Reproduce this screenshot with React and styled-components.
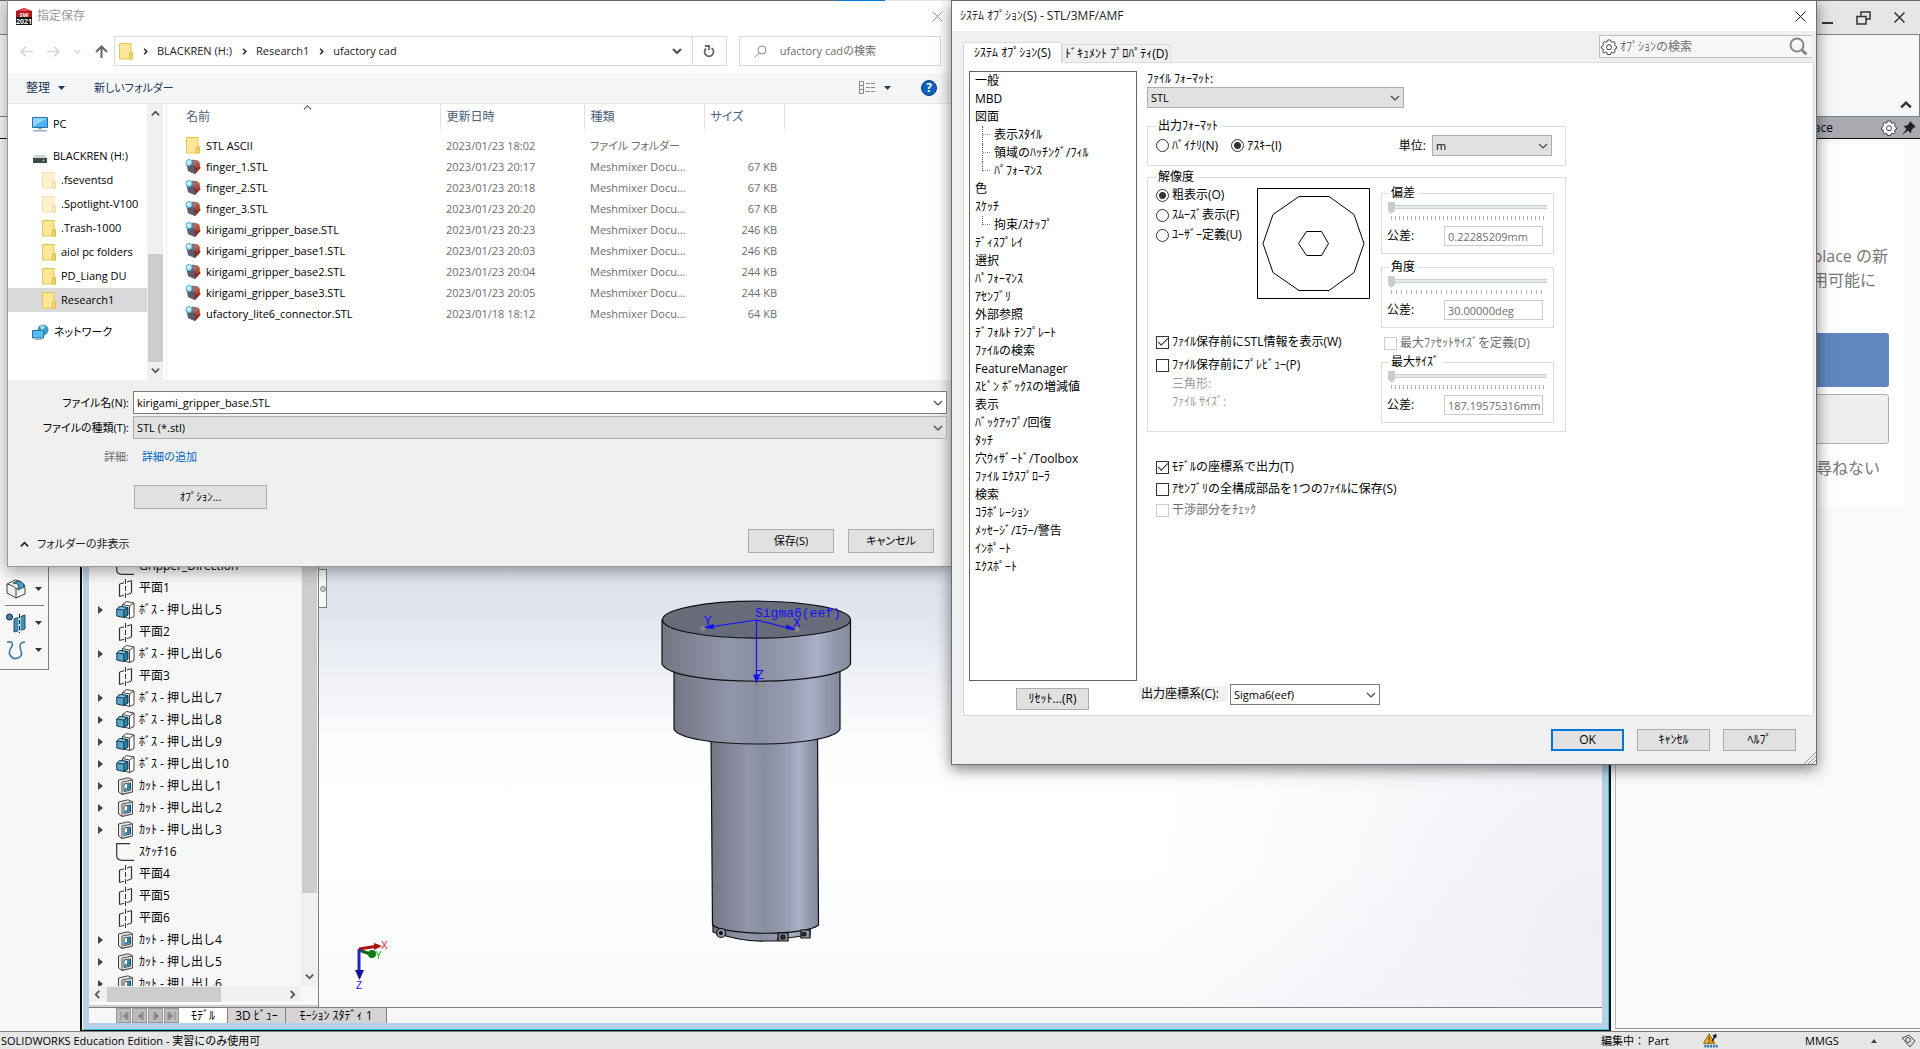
import React from "react";
import styled, { createGlobalStyle, css } from "styled-components";

const Global = createGlobalStyle`
  * { box-sizing: border-box; }
  body { margin: 0; background: #f7f7f7; }
  body, button, input, select, textarea {
    font-family: "Open Sans", "Noto Sans CJK JP", sans-serif;
    font-size: 12px;
    line-height: 18px;
    color: #000;
  }
  svg { display: block; flex: none; }
`;

/* ---------- shell ---------- */
const Desktop = styled.div`
  position: relative;
  height: 100vh;
  min-height: 800px;
  display: grid;
  grid-template-rows: 139px minmax(0, 1fr) 18px;
  overflow: hidden;
  background: #f7f7f7;
`;
const Ribbon = styled.header`
  display: grid;
  grid-template-rows: 34px 1fr 23px;
  border-top: 1px solid #6b6b6b;
`;
const AppTitle = styled.div`
  display: flex;
  justify-content: flex-end;
  align-items: center;
  gap: 23px;
  padding-right: 15px;
  background: #e6e6e6;
  border-bottom: 1px solid #808080;
`;
const RibbonBody = styled.div`
  display: flex;
  justify-content: flex-end;
  align-items: flex-end;
  padding: 0 7px 5px 0;
  background: #f7f7f7;
  border-right: 1px solid #808080;
  color: #333;
`;
const PaneHeader = styled.div`
  display: flex;
  justify-content: flex-end;
  align-items: center;
  gap: 5px;
  padding-right: 4px;
  background: linear-gradient(90deg, #f7f7f7 50%, #a9abb0 50%);
  border-bottom: 1px solid #111;
  border-top: 1px solid #808080;
`;
const PaneTitle = styled.span`
  margin-right: 43px;
`;
const IconButton = styled.button`
  display: flex;
  align-items: center;
  justify-content: center;
  padding: 0;
  border: 0;
  background: none;
  color: #444;
`;
const Workspace = styled.div`
  display: grid;
  grid-template-columns: 83px minmax(0, 1fr) 312px;
  min-height: 0;
`;
const StatusBar = styled.footer`
  display: flex;
  align-items: center;
  justify-content: space-between;
  padding: 0 4px 0 1px;
  background: #e6e6e6;
  border-top: 1px solid #808080;
  font-size: 11px;
  line-height: 16px;
  white-space: nowrap;
`;
const StatusGroup = styled.div`
  display: flex;
  align-items: center;
`;
const StatusItem = styled.span`
  width: ${(p) => p.$w}px;
  display: flex;
  align-items: center;
`;

/* ---------- left toolbar ---------- */
const ToolRail = styled.nav`
  width: 49px;
  height: 531px;
  display: flex;
  flex-direction: column;
  justify-content: flex-end;
  gap: 7px;
  padding: 0 4px 9px 5px;
  border-right: 1px solid #808080;
  border-bottom: 1px solid #808080;
`;
const ToolItem = styled.button`
  display: flex;
  align-items: center;
  gap: 8px;
  height: 20px;
  padding: 0;
  border: 0;
  background: none;
  color: #333;
`;
const ToolRule = styled.hr`
  width: 100%;
  margin: -1px 0 0;
  border: 0;
  border-top: 1px solid #808080;
`;

/* ---------- document ---------- */
const DocFrame = styled.section`
  display: grid;
  grid-template-rows: minmax(0, 1fr) 16px;
  margin-bottom: 2px;
  border: solid #b8cfea;
  border-width: 0 6px 6px 6px;
  outline: 2px solid #0a0a0a;
  outline-offset: 1px;
  box-shadow: 1px 1px 0 #22c7e0;
  min-height: 0;
`;
const DocBody = styled.div`
  display: grid;
  grid-template-columns: 230px minmax(0, 1fr);
  min-height: 0;
`;
const TreePane = styled.div`
  display: grid;
  grid-template-columns: minmax(0, 1fr) 17px;
  grid-template-rows: minmax(0, 1fr) 16px 5px;
  min-height: 0;
  border-right: 1px solid #808080;
  background: #f7f7f7;
`;
const Tree = styled.ul`
  min-height: 0;
  overflow: hidden;
  margin: 0;
  padding: 416px 0 0;
  list-style: none;
`;
const TreeRow = styled.li`
  display: grid;
  grid-template-columns: 18px 23px 1fr;
  align-items: center;
  height: 22px;
  padding-left: 9px;
  white-space: nowrap;
`;
const Splitter = styled.div`
  grid-column: 1 / -1;
  border-top: 2px solid #fff;
  border-bottom: 2px solid #cfcfcf;
`;
const ScrollTrack = styled.div`
  display: flex;
  flex-direction: ${(p) => (p.$horizontal ? "row" : "column")};
  justify-content: space-between;
  align-items: center;
  padding: ${(p) => (p.$horizontal ? "0 4px" : "5px 0")};
  background: #f0f0f0;
  color: #555;
`;
const ScrollThumb = styled.div`
  background: #cdcdcd;
  ${(p) =>
    p.$horizontal
      ? css`width: 114px; height: 15px; margin: 0 auto 0 5px;`
      : css`width: 15px; height: ${p.$h}px; margin: auto 0 ${p.$gap}px;`}
`;
const Viewport = styled.div`
  position: relative;
  overflow: hidden;
  background:
    radial-gradient(circle at 100% 90%, rgba(234, 236, 243, .8), rgba(255, 255, 255, 0) 30%),
    linear-gradient(#d3d8e6 0, #d9ddea 400px, #e2e6ef 480px, #f2f4f8 550px, #fdfdfe 610px, #fff 660px, #fff 84%, #f8f9fb 100%);
`;
const ModelView = styled.svg`
  position: absolute;
  left: 301px;
  top: 441px;
`;
const Triad = styled.svg`
  position: absolute;
  left: 32px;
  bottom: 14px;
`;
const PaneGrip = styled.button`
  position: absolute;
  left: 0;
  top: 430px;
  width: 8px;
  height: 39px;
  padding: 0;
  display: grid;
  place-items: center;
  border: 1px solid #808080;
  border-left: 0;
  background: #f7f7f7;
`;
const DocTabs = styled.nav`
  display: flex;
  background: #f7f7f7;
  border-top: 1px solid #808080;
`;
const TabNav = styled.div`
  display: flex;
  gap: 1px;
  margin-left: 27px;
`;
const TabNavButton = styled.button`
  width: 15px;
  height: 15px;
  padding: 0;
  display: grid;
  place-items: center;
  border: 1px solid #999;
  background: #bcbcbc;
  color: #8a8a8a;
`;
const DocTab = styled.button`
  width: ${(p) => p.$w}px;
  padding: 0;
  border: 0;
  border-right: 1px solid #808080;
  background: ${(p) => (p.$active ? "#fff" : "#d4d4d4")};
  line-height: 15px;
  white-space: nowrap;
  overflow: hidden;
`;

/* ---------- task pane ---------- */
const TaskPane = styled.aside`
  margin: 2px 0 2px 7px;
  padding: 3px 16px 0 0;
  background: #fafafa;
  border-left: 1px solid #bbb;
  border-bottom: 1px solid #999;
`;
const TaskCard = styled.div`
  display: flex;
  flex-direction: column;
  height: 363px;
  padding: 100px 15px 0 120px;
  background: #fff;
`;
const TaskText = styled.p`
  margin: 0 ${(p) => p.$pad}px 0 0;
  color: #777;
  font-size: 16px;
  line-height: 24px;
  text-align: right;
  white-space: nowrap;
`;
const TaskButton = styled.button`
  height: ${(p) => (p.$primary ? 54 : 50)}px;
  margin-top: ${(p) => (p.$primary ? 41 : 7)}px;
  border-radius: 3px;
  border: ${(p) => (p.$primary ? "0" : "1px solid #b0b0b0")};
  background: ${(p) => (p.$primary ? "#6088be" : "#efefef")};
`;
const TaskNote = styled(TaskText)`
  margin-top: 12px;
`;

/* ---------- dialogs ---------- */
const WindowLayer = styled.div`
  position: absolute;
  inset: 0 0 auto 0;
  display: grid;
  grid-template-columns: minmax(0, 944fr) minmax(0, 866fr);
  align-items: start;
  padding: 0 103px 0 7px;
`;
const Dialog = styled.section`
  display: flex;
  flex-direction: column;
  background: #f0f0f0;
  border: 1px solid ${(p) => (p.$active ? "#6e6e6e" : "#999")};
  border-top-color: #6b6b6b;
  box-shadow: 0 4px 14px rgba(0, 0, 0, ${(p) => (p.$active ? 0.5 : 0.35)});
`;
const SaveWindow = styled(Dialog)`
  border-right: 0;
  border-top: 0;
  font-size: 11px;
  input, select, button { font-size: 11px; }
`;
const EdgeLine = styled.div`
  height: 1px;
  background: linear-gradient(90deg, #6b6b6b 88%, #0078d7 88%, #0078d7 93%, #e5e5e5 93%);
`;
const TitleBar = styled.header`
  display: flex;
  align-items: center;
  gap: 5px;
  height: 30px;
  padding: 0 ${(p) => p.$right}px 0 8px;
  background: #fff;
  color: ${(p) => (p.$muted ? "#999" : "#222")};
`;
const DialogTitle = styled.h1`
  flex: 1;
  margin: 0;
  font-size: 12px;
  font-weight: 400;
`;
const NavRow = styled.div`
  display: grid;
  grid-template-columns: 94px minmax(0, 612fr) minmax(0, 202fr);
  column-gap: 12px;
  padding: 5px 10px 7px 0;
  background: #fff;
`;
const NavArrows = styled.div`
  display: flex;
  align-items: center;
  gap: 14px;
  padding-left: 12px;
  color: #d6d6d6;
`;
const AddressBar = styled.div`
  display: flex;
  align-items: center;
  height: 30px;
  border: 1px solid #d9d9d9;
  padding-left: 4px;
`;
const Crumb = styled.a`
  display: flex;
  align-items: center;
  margin-left: 9px;
  gap: 8px;
  color: #222;
  text-decoration: none;
  white-space: nowrap;
`;
const AddressEnd = styled.div`
  display: flex;
  align-items: center;
  margin-left: auto;
  height: 100%;
  color: #555;
`;
const RefreshButton = styled(IconButton)`
  width: 34px;
  height: 100%;
  margin-left: 10px;
  border-left: 1px solid #d9d9d9;
`;
const SearchField = styled.label`
  display: flex;
  align-items: center;
  gap: 13px;
  height: 30px;
  padding: 0 4px 0 14px;
  border: 1px solid #d9d9d9;
  color: #888;
`;
const BareInput = styled.input`
  flex: 1;
  min-width: 0;
  padding: 0;
  border: 0;
  outline: 0;
  background: none;
  &::placeholder { color: #6d6d6d; opacity: 1; }
`;
const CommandBar = styled.div`
  display: flex;
  align-items: center;
  height: 31px;
  padding: 0 14px 0 18px;
  background: #f5f6f7;
  border-bottom: 1px solid #e3e5e8;
`;
const Command = styled.button`
  display: flex;
  align-items: center;
  gap: 8px;
  padding: 0;
  border: 0;
  background: none;
  color: #1e395b;
  margin-right: ${(p) => p.$gap || 0}px;
  font-feature-settings: "palt";
`;
const CommandText = styled.span`
  font-size: 12px;
`;
const CommandEnd = styled.div`
  display: flex;
  align-items: center;
  margin-left: auto;
`;
const Browser = styled.div`
  display: grid;
  grid-template-columns: 139px 16px 4px minmax(0, 1fr);
  height: 276px;
  background: #fff;
`;
const FolderTree = styled.ul`
  margin: 0;
  padding: 8px 0 0;
  list-style: none;
`;
const FolderRow = styled.li`
  display: flex;
  align-items: center;
  gap: 5px;
  height: 24px;
  margin: 0 0 ${(p) => (p.$after ? 8 : 0)}px;
  padding-left: ${(p) => (p.$nested ? 34 : 24)}px;
  background: ${(p) => (p.$selected ? "#d9d9d9" : "none")};
  white-space: nowrap;
  font-feature-settings: "palt";
`;
const PaneRule = styled.div`
  border-right: 1px solid #f0f0f0;
`;
const FileTable = styled.table`
  width: 100%;
  table-layout: fixed;
  border-collapse: collapse;
  align-self: start;
`;
const HeadCell = styled.th`
  position: relative;
  width: ${(p) => p.$w};
  height: 25px;
  padding: 0 0 0 ${(p) => p.$pad || 6}px;
  border-right: ${(p) => (p.$last ? "0" : "1px solid #e2e2e2")};
  color: #4c607a;
  font-size: 12px;
  font-weight: 400;
  text-align: left;
  font-feature-settings: "palt";
`;
const SortMark = styled.span`
  position: absolute;
  left: 50%;
  top: -1px;
  color: #555;
`;
const FileCell = styled.td`
  height: 21px;
  padding: 0 7px 0 6px;
  color: #6d6d6d;
  text-align: ${(p) => (p.$right ? "right" : "left")};
  white-space: nowrap;
  font-feature-settings: "palt";
`;
const HeadGap = styled.tr`
  height: 6px;
`;
const FileName = styled.div`
  display: flex;
  align-items: center;
  gap: 5px;
  padding-left: 12px;
  color: #000;
`;
const FileIcon = styled.span`
  width: 16px;
  display: flex;
  justify-content: center;
`;
const SaveForm = styled.form`
  display: grid;
  grid-template-columns: 121px minmax(0, 1fr);
  column-gap: 4px;
  row-gap: 2px;
  padding: 11px 4px 0 0;
`;
const FieldLabel = styled.label`
  align-self: center;
  text-align: right;
  white-space: nowrap;
  font-feature-settings: "palt";
  color: ${(p) => (p.$muted ? "#6d6d6d" : "#000")};
`;
const DetailLink = styled.a`
  padding: 7px 0 7px 9px;
  color: #0066cc;
  text-decoration: none;
`;
const Push = styled.button`
  width: ${(p) => p.$w}px;
  height: ${(p) => p.$h || 24}px;
  padding: 0;
  border: ${(p) => (p.$default ? "2px solid #0078d7" : "1px solid #adadad")};
  background: #e1e1e1;
  font-feature-settings: "palt";
`;
const OptionRow = styled.div`
  grid-column: 2;
  padding: 10px 0 0 1px;
`;
const SaveFooter = styled.footer`
  display: flex;
  align-items: flex-end;
  gap: 14px;
  padding: 20px 17px 13px 12px;
`;
const HideFolders = styled(Command)`
  color: #222;
  margin-right: auto;
`;

/* ---------- form parts ---------- */
const Combo = styled.span`
  position: relative;
  display: flex;
  align-items: center;
  height: ${(p) => p.$h || 21}px;
  width: ${(p) => (p.$w ? `${p.$w}px` : "auto")};
  border: 1px solid ${(p) => (p.$white ? "#7a7a7a" : "#adadad")};
  background: ${(p) => (p.$white ? "#fff" : "#e1e1e1")};
  color: #444;
  font-size: 11px;
`;
const comboText = css`
  width: 100%;
  height: 100%;
  padding: 0 20px 0 3px;
  border: 0;
  outline: 0;
  background: none;
  appearance: none;
  font-size: 11px;
`;
const ComboSelect = styled.select`${comboText}`;
const ComboInput = styled.input`${comboText}`;
const ComboArrow = styled.span`
  position: absolute;
  right: 3px;
  pointer-events: none;
`;

/* ---------- options dialog ---------- */
const OptionsTop = styled.div`
  display: flex;
  align-items: flex-end;
  justify-content: space-between;
  height: 31px;
  padding: 0 4px 0 11px;
`;
const TabStrip = styled.div`
  display: flex;
  align-items: flex-end;
`;
const Tab = styled.button`
  position: relative;
  width: ${(p) => p.$w}px;
  height: ${(p) => (p.$active ? 21 : 18)}px;
  margin-bottom: ${(p) => (p.$active ? -1 : 0)}px;
  padding: 0;
  border: 1px solid #dcdcdc;
  border-bottom: 0;
  background: ${(p) => (p.$active ? "#fff" : "#f0f0f0")};
  line-height: 16px;
  white-space: nowrap;
`;
const OptionSearch = styled.label`
  display: flex;
  align-items: center;
  gap: 3px;
  width: 213px;
  height: 23px;
  margin-bottom: 4px;
  padding: 0 4px 0 1px;
  border: 1px solid #c0c0c0;
  border-right: 0;
  background: #f7f7f7;
`;
const OptionsPane = styled.div`
  display: grid;
  grid-template-columns: 168px minmax(0, 1fr);
  column-gap: 10px;
  margin: 0 2px 0 11px;
  padding: 8px 6px 4px 5px;
  border: 1px solid #dcdcdc;
  background: #fff;
`;
const Category = styled.ul`
  height: 610px;
  margin: 0;
  padding: 0;
  border: 1px solid #646464;
  list-style: none;
`;
const CategoryItem = styled.li`
  display: flex;
  height: 18px;
  padding-left: ${(p) => (p.$nested ? 12 : 5)}px;
  white-space: nowrap;
`;
const Branch = styled.span`
  width: 9px;
  height: ${(p) => (p.$end ? 9 : 18)}px;
  margin-right: 3px;
  border-left: 1px dotted #666;
  background: linear-gradient(90deg, #888 50%, transparent 50%) 0 8px / 2px 1px repeat-x;
`;
const Settings = styled.div`
  display: flex;
  flex-direction: column;
  align-items: flex-start;
`;
const Caption = styled.label`
  margin-bottom: 1px;
  line-height: 15px;
`;
const Group = styled.fieldset`
  width: ${(p) => p.$w}px;
  margin: ${(p) => p.$mt || 0}px 0 0;
  padding: ${(p) => p.$pad};
  min-width: 0;
  border: 1px solid #dcdcdc;
`;
const Legend = styled.legend`
  margin-left: ${(p) => p.$in || 0}px;
  padding: 0 3px 0 2px;
  height: 18px;
`;
const FormatRow = styled.div`
  display: flex;
  align-items: center;
  gap: 13px;
`;
const UnitField = styled.div`
  display: flex;
  align-items: center;
  gap: 6px;
  margin-left: auto;
`;
const Choice = styled.label`
  display: flex;
  align-items: center;
  gap: 3px;
  color: ${(p) => (p.$off ? "#6d6d6d" : "#000")};
  margin-bottom: ${(p) => p.$mb || 0}px;
  white-space: nowrap;
`;
const InsetChoice = styled(Choice)`
  padding: 6px 0 0 3px;
`;
const Radio = styled.input`
  appearance: none;
  width: 13px;
  height: 13px;
  margin: 0;
  border: 1px solid #333;
  border-radius: 50%;
  background: ${(p) => (p.defaultChecked ? "radial-gradient(#333 3px, #fff 4px)" : "#fff")};
`;
const Check = styled.input`
  appearance: none;
  display: grid;
  place-items: center;
  width: 13px;
  height: 13px;
  margin: 0;
  border: 1px solid ${(p) => (p.disabled ? "#ccc" : "#333")};
  background: #fff;
  &:checked::after {
    content: "";
    width: 9px;
    height: 4px;
    margin-bottom: 3px;
    border: solid #333;
    border-width: 0 0 1px 1px;
    transform: rotate(-45deg);
  }
`;
const Resolution = styled.div`
  display: grid;
  grid-template-columns: 101px 124px 173px;
  grid-template-rows: 113px 1fr;
  align-items: start;
`;
const RadioStack = styled.div`
  display: flex;
  flex-direction: column;
  gap: 2px;
`;
const Preview = styled.svg`
  margin-top: 2px;
`;
const LowerLeft = styled.div`
  grid-column: 1 / 3;
  padding-top: 34px;
`;
const Dimmed = styled.div`
  padding: 2px 0 0 16px;
  color: #999;
  line-height: 16px;
`;
const ToleranceColumn = styled.div`
  grid-column: 3;
  grid-row: 1 / 3;
`;
const Slider = styled.input`
  display: block;
  appearance: none;
  width: 100%;
  height: 12px;
  margin: 0;
  background: linear-gradient(#d0d0d0, #d0d0d0) 4px 3px / 100% 1px no-repeat,
    linear-gradient(#e7eaea, #e7eaea) 4px 4px / 100% 2px no-repeat,
    linear-gradient(#d0d0d0, #d0d0d0) 4px 6px / 100% 1px no-repeat;
  &::-webkit-slider-thumb {
    appearance: none;
    width: 7px;
    height: 12px;
    background: #ccc;
    clip-path: polygon(0 0, 100% 0, 100% 70%, 50% 100%, 0 70%);
  }
`;
const Ticks = styled.div`
  height: 4px;
  margin: 2px 3px 0;
  background: repeating-linear-gradient(90deg, #b5b5b5 0 1px, transparent 1px ${(p) => p.$step}px);
`;
const ToleranceField = styled.div`
  display: flex;
  align-items: center;
  justify-content: space-between;
  padding: 6px 4px 2px 0;
`;
const ToleranceLabel = styled.label`
  margin-left: -1px;
`;
const ValueInput = styled.input`
  width: 99px;
  height: 20px;
  padding: 0 0 0 3px;
  border: 1px solid #ccc;
  background: #fff;
  color: #6d6d6d;
  font-size: 11px;
`;
const OutputChecks = styled.div`
  padding: 26px 0 0 9px;
`;
const BottomRow = styled.div`
  grid-column: 1 / -1;
  display: flex;
  align-items: flex-start;
  height: 30px;
  padding: 3px 0 0 47px;
`;
const ResetButton = styled(Push)`
  margin-top: 4px;
`;
const OriginLabel = styled.label`
  margin: 2px 2px 0 50px;
  padding-left: 2px;
  width: 89px;
  background: #f0f0f0;
  line-height: 16px;
  white-space: nowrap;
`;
const OptionsFooter = styled.footer`
  display: flex;
  justify-content: flex-end;
  gap: 13px;
  height: 48px;
  padding: 13px 0 0;
`;
const Grip = styled.svg`
  align-self: flex-end;
  margin-left: -5px;
`;

/* ---------- icons ---------- */
const Chevron = ({ dir = "down", size = 9, w = 2 }) => {
  const d = { down: "M1 3l4 4 4-4", up: "M1 7l4-4 4 4", left: "M7 1L3 5l4 4", right: "M3 1l4 4-4 4" }[dir];
  return (
    <svg width={size} height={size} viewBox="0 0 10 10" fill="none" stroke="currentColor" strokeWidth={w}>
      <path d={d} />
    </svg>
  );
};
const Caret = ({ color = "#333" }) => (
  <svg width="7" height="4" viewBox="0 0 7 4"><path d="M0 0h7L3.500 4z" fill={color} /></svg>
);
const Arrow = ({ dir, color = "#d6d6d6" }) => (
  <svg width="13" height="13" viewBox="0 0 13 13" fill="none" stroke={color} strokeWidth={dir === "up" ? 2 : 1.5}>
    {dir === "left" && <path d="M13 6.500H1M6 1.500l-5 5 5 5" />}
    {dir === "right" && <path d="M0 6.500h12M7 1.500l5 5-5 5" />}
    {dir === "up" && <path d="M6.500 13V2M1 7l5.500-5.500L12 7" />}
  </svg>
);
const Cross = ({ size = 11, color = "#111", w = 1 }) => (
  <svg width={size} height={size} viewBox="0 0 11 11" stroke={color} strokeWidth={w}><path d="M.5.5l10 10M10.500.5l-10 10" /></svg>
);
const Folder = ({ faded }) => (
  <svg width="14" height="17" viewBox="0 0 14 17" opacity={faded ? 0.5 : 1}>
    <path d="M.5.5h11.500v9h1.500v6.500H.5z" fill="#ffe79a" stroke="#e9c44c" />
    <path d="M10.500 10h2.500v6h-2.500z" fill="#ffe08a" stroke="#e3b93a" />
  </svg>
);
const Gear = () => (
  <svg width="16" height="16" viewBox="0 0 16 16" fill="#fff" stroke="#444">
    <path d="M6.500 1h3l.5 1.800 1.200.5L13 2.500 14.200 4l-.7 1.500.5 1.200 1.500.6v2l-1.500.6-.5 1.200.7 1.600L12.800 14l-1.600-.8-1.200.5-.5 1.800h-3L6 13.700l-1.200-.5-1.600.8L1.800 12.700l.7-1.600L2 9.900l-1.500-.6v-2L2 6.700l.5-1.200L1.800 4 3.200 2.500l1.600.8L6 2.800z" />
    <circle cx="8" cy="8.200" r="2.500" />
  </svg>
);
const SwIcon = () => (
  <svg width="16" height="17" viewBox="0 0 16 17">
    <path d="M0 3l8-3 8 3v7H0z" fill="#b5161c" /><path d="M2 2.500L8 .5l6 2-6 1z" fill="#e4474c" />
    <path d="M0 9h16v8H0z" fill="#111" />
    <text x="8" y="9" fontSize="6" fontWeight="700" fill="#fff" textAnchor="middle">SW</text>
    <text x="8" y="16" fontSize="7" fontWeight="700" fill="#fff" textAnchor="middle">2021</text>
  </svg>
);
const PcIcon = () => (
  <svg width="16" height="16" viewBox="0 0 16 16">
    <path d="M.5 1.500h15v10H.5z" fill="#49b5f5" stroke="#2a6f9c" /><path d="M1 2h14L1 11z" fill="#8ed4ff" />
    <path d="M6 12h4v1.500H6zM1 14h14v1.500H1z" fill="#9fb4c4" />
  </svg>
);
const DriveIcon = () => (
  <svg width="16" height="16" viewBox="0 0 16 16">
    <path d="M3 7h10l2 3H1z" fill="#d5d5d5" /><path d="M1 10h14v5H1z" fill="#45484a" /><circle cx="11.500" cy="12.500" r="1" fill="#4fe04f" />
  </svg>
);
const NetIcon = () => (
  <svg width="17" height="17" viewBox="0 0 17 17">
    <circle cx="11" cy="6" r="5.500" fill="#3f9cc4" /><path d="M8 2q3-2 5 1l-3 4z" fill="#a9d8ec" />
    <path d="M.5 6.500h11v7.500H.5z" fill="#56bdf8" stroke="#2a6f9c" /><path d="M3 15.500h7" stroke="#9fb4c4" />
  </svg>
);
const MeshIcon = () => (
  <svg width="16" height="16" viewBox="0 0 16 16">
    <path d="M1 4l7-3.500 6 2 1.500 6.500L10 15l-7-3z" fill="#6b6f80" />
    <path d="M7 2l5-1 3 3-5 4z" fill="#9a6f78" /><path d="M10 2l4 1 1 5-2-1z" fill="#d8592a" />
    <path d="M3 5l6 2 1 8-7-3z" fill="#5a5d6e" /><path d="M9 7l4 0 2.500 2-5.500 6z" fill="#8c2b26" /><path d="M9 7l5-3-1 6z" fill="#b04a3c" />
    <circle cx="4" cy="3.500" r="3" fill="#bfe9f5" stroke="#45b4d4" /><path d="M3 4l2-2" stroke="#fff" />
  </svg>
);
const BossIcon = () => (
  <svg width="19" height="18" viewBox="0 0 19 18" strokeLinejoin="round">
    <path d="M6.500 3.500l4-3 7.500 1.500v13.500l-4.500 2-7-2z" fill="#fff" stroke="#444" />
    <path d="M6.500 3.500l7 1.500L18 2M13.500 5v12.500" fill="none" stroke="#444" />
    <path d="M.8 8l3-2.500 8 1V14l-4 2.500-7-1.500z" fill="#5aa6c8" stroke="#123f55" />
    <path d="M.8 8l3-2.500 8 1-4 2.500z" fill="#8ecbe4" stroke="#123f55" />
    <path d="M7.800 9l4-2.500V14l-4 2.500z" fill="#2f7ea3" stroke="#123f55" />
  </svg>
);
const CutIcon = () => (
  <svg width="19" height="18" viewBox="0 0 19 18" strokeLinejoin="round">
    <path d="M2.500 3L12 .8l4.500 2V15L6 17.500 2.500 15z" fill="#e8e8e8" stroke="#444" />
    <path d="M6 5l10.500-2v12L6 17.300z" fill="#d9e0e4" stroke="#555" /><path d="M8 7l6.500-1v7L8 14.500z" fill="#fff" stroke="#444" />
    <path d="M11 6.500l3-.5v6.500l-5.500 1.500v-2.500l2.500-.5z" fill="#2f86ad" />
  </svg>
);
const PlaneIcon = () => (
  <svg width="19" height="19" viewBox="0 0 19 19" fill="none" stroke="#333">
    <path d="M3.500 5v12.500M15.500 1.500V14" strokeWidth="1.200" />
    <path d="M3.500 5l4.500-1.200M11 3l4.500-1.500M3.500 17.500l4.500-1.200M11 15.500l4.500-1.500" />
    <path d="M9.500 0v19" strokeDasharray="5 2" />
  </svg>
);
const SketchIcon = () => (
  <svg width="19" height="18" viewBox="0 0 19 18" fill="none" stroke="#333" strokeWidth="1.200"><path d="M14 .7H.7v12q0 4.600 6 4.600H18" /></svg>
);
const treeIcons = { boss: BossIcon, cut: CutIcon, plane: PlaneIcon, sketch: SketchIcon };

/* ---------- data ---------- */
const features = [
  ["sketch", "Gripper_Direction"], ["plane", "平面1"], ["boss", "ﾎﾞｽ - 押し出し5"], ["plane", "平面2"],
  ["boss", "ﾎﾞｽ - 押し出し6"], ["plane", "平面3"], ["boss", "ﾎﾞｽ - 押し出し7"], ["boss", "ﾎﾞｽ - 押し出し8"],
  ["boss", "ﾎﾞｽ - 押し出し9"], ["boss", "ﾎﾞｽ - 押し出し10"], ["cut", "ｶｯﾄ - 押し出し1"], ["cut", "ｶｯﾄ - 押し出し2"],
  ["cut", "ｶｯﾄ - 押し出し3"], ["sketch", "ｽｹｯﾁ16"], ["plane", "平面4"], ["plane", "平面5"], ["plane", "平面6"],
  ["cut", "ｶｯﾄ - 押し出し4"], ["cut", "ｶｯﾄ - 押し出し5"], ["cut", "ｶｯﾄ - 押し出し6"],
];
const files = [
  ["STL ASCII", "2023/01/23 18:02", "ファイル フォルダー", ""],
  ["finger_1.STL", "2023/01/23 20:17", "Meshmixer Docu...", "67 KB"],
  ["finger_2.STL", "2023/01/23 20:18", "Meshmixer Docu...", "67 KB"],
  ["finger_3.STL", "2023/01/23 20:20", "Meshmixer Docu...", "67 KB"],
  ["kirigami_gripper_base.STL", "2023/01/23 20:23", "Meshmixer Docu...", "246 KB"],
  ["kirigami_gripper_base1.STL", "2023/01/23 20:03", "Meshmixer Docu...", "246 KB"],
  ["kirigami_gripper_base2.STL", "2023/01/23 20:04", "Meshmixer Docu...", "244 KB"],
  ["kirigami_gripper_base3.STL", "2023/01/23 20:05", "Meshmixer Docu...", "244 KB"],
  ["ufactory_lite6_connector.STL", "2023/01/18 18:12", "Meshmixer Docu...", "64 KB"],
];
const folders = [
  [".fseventsd", true], [".Spotlight-V100", true], [".Trash-1000"], ["aiol pc folders"], ["PD_Liang DU"], ["Research1"],
];
const categories = [
  ["一般"], ["MBD"], ["図面"], ["表示ｽﾀｲﾙ", "mid"], ["領域のﾊｯﾁﾝｸﾞ/ﾌｨﾙ", "mid"], ["ﾊﾟﾌｫｰﾏﾝｽ", "end"], ["色"], ["ｽｹｯﾁ"],
  ["拘束/ｽﾅｯﾌﾟ", "end"], ["ﾃﾞｨｽﾌﾟﾚｲ"], ["選択"], ["ﾊﾟﾌｫｰﾏﾝｽ"], ["ｱｾﾝﾌﾞﾘ"], ["外部参照"], ["ﾃﾞﾌｫﾙﾄ ﾃﾝﾌﾟﾚｰﾄ"],
  ["ﾌｧｲﾙの検索"], ["FeatureManager"], ["ｽﾋﾟﾝ ﾎﾞｯｸｽの増減値"], ["表示"], ["ﾊﾞｯｸｱｯﾌﾟ/回復"], ["ﾀｯﾁ"],
  ["穴ｳｨｻﾞｰﾄﾞ/Toolbox"], ["ﾌｧｲﾙ ｴｸｽﾌﾟﾛｰﾗ"], ["検索"], ["ｺﾗﾎﾞﾚｰｼｮﾝ"], ["ﾒｯｾｰｼﾞ/ｴﾗｰ/警告"], ["ｲﾝﾎﾟｰﾄ"], ["ｴｸｽﾎﾟｰﾄ"],
];

/* ---------- pieces ---------- */
const Model = () => (
  <ModelView width="300" height="380" viewBox="0 0 300 380">
    <defs>
      <linearGradient id="metal">
        <stop offset="0" stopColor="#747685" /><stop offset=".35" stopColor="#9196aa" /><stop offset=".5" stopColor="#888da0" />
        <stop offset=".72" stopColor="#999eb4" /><stop offset=".82" stopColor="#abb0c8" /><stop offset=".92" stopColor="#9297ab" /><stop offset="1" stopColor="#85899d" />
      </linearGradient>
    </defs>
    <g stroke="#111" fill="url(#metal)" strokeWidth="1.200">
      <path d="M93 345v7q28 10 52 9h12l1-3h9l23-3v-10z" />
      <path d="M91 150l1.500 195c12 11 94 11 106 0L197.500 150z" />
      <path d="M54 80v69c8 20 158 20 166 0V80z" />
      <path d="M42 40v44c10 23 178 23 188.500 0V40z" />
      <ellipse cx="136.500" cy="39.700" rx="94" ry="18.500" fill="#686b79" />
      <circle cx="101" cy="353" r="4.500" /><path d="M158 353h10v8h-10zM181 350h9v8h-9z" />
      <circle cx="101" cy="353" r="1.500" fill="#111" /><circle cx="163" cy="357" r="2" fill="#333" /><circle cx="184" cy="354" r="2" fill="#333" />
    </g>
    <g fill="#888"><circle cx="83" cy="48.500" r="2.500" /><circle cx="177" cy="49.500" r="2.500" /><circle cx="137" cy="104.500" r="2.800" /></g>
    <g stroke="#11f" fill="#11f" strokeWidth="1.200">
      <path d="M136.500 40L86 47.500M136.500 40l38 9.500M136.500 40v61" fill="none" />
      <path d="M85 47.500l8-3v4zM175 49.500l-8-4-.5 3zM136.500 102l-2.500-7h5z" />
    </g>
    <g fill="#11f" fontFamily="'Liberation Mono', monospace" fontSize="13">
      <text x="135" y="37">Sigma6(eef)</text>
      <text x="84" y="45">Y</text><text x="173" y="47">X</text><text x="136" y="99">Z</text>
    </g>
  </ModelView>
);

const TriadIcon = () => (
  <Triad width="40" height="52" viewBox="0 0 40 52">
    <path d="M8 9L22 14" stroke="#116611" strokeWidth="3" /><circle cx="21" cy="13" r="4" fill="#117a11" />
    <path d="M8 8l19-3" stroke="#a11" strokeWidth="3" /><path d="M23 2l8 3-8 4z" fill="#a11" />
    <path d="M8 8v24" stroke="#22c" strokeWidth="3" /><path d="M4 29h9l-4.500 10z" fill="#119" />
    <g fontSize="10" fontFamily="'Liberation Sans', sans-serif">
      <text x="30" y="8" fill="#e11">X</text><text x="24" y="18" fill="#1a1">Y</text><text x="5" y="48" fill="#11e">Z</text>
    </g>
  </Triad>
);

const Dropdown = ({ id, value, ...rest }) => (
  <Combo {...rest}>
    <ComboSelect id={id} defaultValue={value}><option>{value}</option></ComboSelect>
    <ComboArrow><Chevron size={10} w={1.2} /></ComboArrow>
  </Combo>
);

const Tolerance = ({ id, title, value, mt, step }) => (
  <Group $mt={mt} $pad="0 6px 5px 6px">
    <Legend $in={1}>{title}</Legend>
    <Slider type="range" min="0" max="30" defaultValue="0" disabled aria-label={title} />
    <Ticks $step={step} />
    <ToleranceField>
      <ToleranceLabel htmlFor={id}>公差:</ToleranceLabel>
      <ValueInput id={id} defaultValue={value} disabled />
    </ToleranceField>
  </Group>
);

const SaveDialog = () => (
  <SaveWindow>
    <EdgeLine />
    <TitleBar $muted $right={8}>
      <SwIcon />
      <DialogTitle>指定保存</DialogTitle>
      <IconButton aria-label="閉じる"><Cross color="#999" /></IconButton>
    </TitleBar>
    <NavRow>
      <NavArrows>
        <Arrow dir="left" /><Arrow dir="right" /><Chevron size={7} /><Arrow dir="up" color="#666" />
      </NavArrows>
      <AddressBar>
        <Folder />
        {["BLACKREN (H:)", "Research1", "ufactory cad"].map((c) => (
          <Crumb key={c} href="#"><Chevron dir="right" size={7} />{c}</Crumb>
        ))}
        <AddressEnd>
          <Chevron size={10} w={2.2} />
          <RefreshButton aria-label="更新">
            <svg width="12" height="13" viewBox="0 0 12 13" fill="none" stroke="#666" strokeWidth="1.800"><path d="M8.500 3A4.500 4.500 0 1 1 3 3.500M2 1h4v4" /></svg>
          </RefreshButton>
        </AddressEnd>
      </AddressBar>
      <SearchField>
        <svg width="13" height="13" viewBox="0 0 13 13" fill="none" stroke="#888"><circle cx="8" cy="5" r="4" /><path d="M5 8L.5 12.500" /></svg>
        <BareInput placeholder="ufactory cadの検索" />
      </SearchField>
    </NavRow>
    <CommandBar>
      <Command $gap={29}><CommandText>整理</CommandText><Caret color="#1e395b" /></Command>
      <Command>新しいフォルダー</Command>
      <CommandEnd>
        <Command $gap={30} aria-label="表示方法">
          <svg width="17" height="14" viewBox="0 0 17 14" fill="none" stroke="#888">
            <path d="M.5.5h4v12h-4zM.5 4.500h4M.5 8.500h4M7 2.500h4M12 2.500h4M7 6.500h4M12 6.500h4M7 10.500h4M12 10.500h4" />
          </svg>
          <Caret color="#1e395b" />
        </Command>
        <IconButton aria-label="ヘルプ">
          <svg width="16" height="16" viewBox="0 0 16 16"><circle cx="8" cy="8" r="7.500" fill="#0a63c2" stroke="#083f80" /><text x="8" y="12" fontSize="12" fontWeight="700" fill="#fff" textAnchor="middle">?</text></svg>
        </IconButton>
      </CommandEnd>
    </CommandBar>
    <Browser>
      <FolderTree>
        <FolderRow $after><PcIcon />PC</FolderRow>
        <FolderRow><DriveIcon />BLACKREN (H:)</FolderRow>
        {folders.map(([name, faded]) => (
          <FolderRow key={name} $nested $selected={name === "Research1"} $after={name === "Research1"}><Folder faded={faded} />{name}</FolderRow>
        ))}
        <FolderRow><NetIcon />ネットワーク</FolderRow>
      </FolderTree>
      <ScrollTrack>
        <Chevron dir="up" /><ScrollThumb $h={108} $gap={4} /><Chevron />
      </ScrollTrack>
      <PaneRule />
      <FileTable>
        <thead>
          <tr>
            <HeadCell $w="273px" $pad={19}>名前<SortMark><Chevron dir="up" w={1.2} /></SortMark></HeadCell>
            <HeadCell $w="144px">更新日時</HeadCell>
            <HeadCell $w="120px">種類</HeadCell>
            <HeadCell $w="80px">サイズ</HeadCell>
            <HeadCell as="td" $last />
          </tr>
        </thead>
        <tbody>
          <HeadGap />
          {files.map(([name, date, kind, size]) => (
            <tr key={name}>
              <FileCell><FileName><FileIcon>{size ? <MeshIcon /> : <Folder />}</FileIcon>{name}</FileName></FileCell>
              <FileCell>{date}</FileCell>
              <FileCell>{kind}</FileCell>
              <FileCell $right>{size}</FileCell>
            </tr>
          ))}
        </tbody>
      </FileTable>
    </Browser>
    <SaveForm>
      <FieldLabel htmlFor="filename">ファイル名(N):</FieldLabel>
      <Combo $white $h={23}>
        <ComboInput id="filename" defaultValue="kirigami_gripper_base.STL" />
        <ComboArrow><Chevron size={10} w={1.2} /></ComboArrow>
      </Combo>
      <FieldLabel htmlFor="filetype">ファイルの種類(T):</FieldLabel>
      <Dropdown id="filetype" value="STL (*.stl)" $h={23} />
      <FieldLabel as="span" $muted>詳細:</FieldLabel>
      <DetailLink href="#">詳細の追加</DetailLink>
      <OptionRow><Push type="button" $w={133}>ｵﾌﾟｼｮﾝ...</Push></OptionRow>
    </SaveForm>
    <SaveFooter>
      <HideFolders><Chevron dir="up" />フォルダーの非表示</HideFolders>
      <Push $w={86}>保存(S)</Push>
      <Push $w={86}>キャンセル</Push>
    </SaveFooter>
  </SaveWindow>
);

const OptionsDialog = () => (
  <Dialog $active>
    <TitleBar $right={10}>
      <DialogTitle>ｼｽﾃﾑ ｵﾌﾟｼｮﾝ(S) - STL/3MF/AMF</DialogTitle>
      <IconButton aria-label="閉じる"><Cross /></IconButton>
    </TitleBar>
    <OptionsTop>
      <TabStrip>
        <Tab $active $w={99}>ｼｽﾃﾑ ｵﾌﾟｼｮﾝ(S)</Tab>
        <Tab $w={109}>ﾄﾞｷｭﾒﾝﾄ ﾌﾟﾛﾊﾟﾃｨ(D)</Tab>
      </TabStrip>
      <OptionSearch>
        <Gear />
        <BareInput placeholder="ｵﾌﾟｼｮﾝの検索" />
        <svg width="19" height="19" viewBox="0 0 19 19" fill="none" stroke="#888" strokeWidth="2"><circle cx="8" cy="8" r="6.500" /><path d="M12.500 12.500l5 5" strokeWidth="3" /></svg>
      </OptionSearch>
    </OptionsTop>
    <OptionsPane>
      <Category>
        {categories.map(([name, branch], i) => (
          <CategoryItem key={i} $nested={!!branch}>{branch && <Branch $end={branch === "end"} />}{name}</CategoryItem>
        ))}
      </Category>
      <Settings>
        <Caption htmlFor="format">ﾌｧｲﾙ ﾌｫｰﾏｯﾄ:</Caption>
        <Dropdown id="format" value="STL" $w={257} />
        <Group $w={419} $mt={9} $pad="0 13px 9px 8px">
          <Legend>出力ﾌｫｰﾏｯﾄ</Legend>
          <FormatRow>
            <Choice><Radio type="radio" name="out" />ﾊﾞｲﾅﾘ(N)</Choice>
            <Choice><Radio type="radio" name="out" defaultChecked />ｱｽｷｰ(I)</Choice>
            <UnitField><label htmlFor="unit">単位:</label><Dropdown id="unit" value="m" $w={120} /></UnitField>
          </FormatRow>
        </Group>
        <Group $w={419} $mt={2} $pad="0 11px 8px 8px">
          <Legend>解像度</Legend>
          <Resolution>
            <RadioStack>
              <Choice><Radio type="radio" name="res" defaultChecked />粗表示(O)</Choice>
              <Choice><Radio type="radio" name="res" />ｽﾑｰｽﾞ表示(F)</Choice>
              <Choice><Radio type="radio" name="res" />ﾕｰｻﾞｰ定義(U)</Choice>
            </RadioStack>
            <Preview width="113" height="111" viewBox="0 0 113 111" fill="none" stroke="#000">
              <path d="M.5.5h112v110H.5z" />
              <path d="M42 8.500h30l25 18 10 29-10 29-25 18H42l-26-18-10-29 10-29z" /><path d="M49.500 43.500h15l7 12-7 12h-15l-8-12z" />
            </Preview>
            <ToleranceColumn>
              <Tolerance id="tol1" title="偏差" value="0.22285209mm" mt={-2} step={4} />
              <Tolerance id="tol2" title="角度" value="30.00000deg" mt={4} step={5} />
              <InsetChoice $off><Check type="checkbox" disabled />最大ﾌｧｾｯﾄｻｲｽﾞを定義(D)</InsetChoice>
              <Tolerance id="tol3" title="最大ｻｲｽﾞ" value="187.19575316mm" mt={1} step={4} />
            </ToleranceColumn>
            <LowerLeft>
              <Choice $mb={5}><Check type="checkbox" defaultChecked />ﾌｧｲﾙ保存前にSTL情報を表示(W)</Choice>
              <Choice><Check type="checkbox" />ﾌｧｲﾙ保存前にﾌﾟﾚﾋﾞｭｰ(P)</Choice>
              <Dimmed>三角形:</Dimmed>
              <Dimmed>ﾌｧｲﾙ ｻｲｽﾞ:</Dimmed>
            </LowerLeft>
          </Resolution>
        </Group>
        <OutputChecks>
          <Choice $mb={4}><Check type="checkbox" defaultChecked />ﾓﾃﾞﾙの座標系で出力(T)</Choice>
          <Choice $mb={3}><Check type="checkbox" />ｱｾﾝﾌﾞﾘの全構成部品を1つのﾌｧｲﾙに保存(S)</Choice>
          <Choice $off><Check type="checkbox" disabled />干渉部分をﾁｪｯｸ</Choice>
        </OutputChecks>
      </Settings>
      <BottomRow>
        <ResetButton $w={73} $h={22}>ﾘｾｯﾄ...(R)</ResetButton>
        <OriginLabel htmlFor="origin">出力座標系(C):</OriginLabel>
        <Dropdown id="origin" value="Sigma6(eef)" $white $w={150} />
      </BottomRow>
    </OptionsPane>
    <OptionsFooter>
      <Push $default $w={73} $h={22}>OK</Push>
      <Push $w={73} $h={22}>ｷｬﾝｾﾙ</Push>
      <Push $w={73} $h={22}>ﾍﾙﾌﾟ</Push>
      <Grip width="12" height="12" viewBox="0 0 12 12" stroke="#999"><path d="M0 12L12 0M4 12l8-8M8 12l4-4" /></Grip>
    </OptionsFooter>
  </Dialog>
);

export default function App() {
  return (
    <Desktop>
      <Global />
      <Ribbon>
        <AppTitle>
          <IconButton aria-label="最小化"><svg width="11" height="12" viewBox="0 0 11 12"><path d="M0 11h11" stroke="#333" strokeWidth="2" /></svg></IconButton>
          <IconButton aria-label="元に戻す"><svg width="15" height="14" viewBox="0 0 15 14" fill="none" stroke="#333" strokeWidth="1.500"><path d="M5 4.500V1h9v7h-4M1 5.500h9V13H1z" /></svg></IconButton>
          <IconButton aria-label="閉じる"><Cross color="#333" w={1.5} /></IconButton>
        </AppTitle>
        <RibbonBody><Chevron dir="up" size={12} /></RibbonBody>
        <PaneHeader>
          <PaneTitle>3DEXPERIENCE Marketplace</PaneTitle>
          <Gear />
          <svg width="14" height="14" viewBox="0 0 14 14"><path d="M8 0l6 6-2 .5-2.500 2.500-.5 3.500-3-3L0 14l4.500-6-3-3L5 4.500 7.500 2z" fill="#222" /></svg>
        </PaneHeader>
      </Ribbon>
      <Workspace>
        <ToolRail>
          <ToolItem aria-label="フィレット">
            <svg width="22" height="20" viewBox="0 0 22 20" strokeLinejoin="round"><path d="M2 5l8-4q9 1 10 8v6l-9 4-9-5z" fill="#eee" stroke="#444" /><path d="M11 19v-9Q10 7 2 5M11 10l9-4" fill="none" stroke="#444" /><path d="M8 4q8 0 5 7l6-3q0-5-6-6z" fill="#4a9ec2" stroke="#1c5570" /></svg>
            <Caret />
          </ToolItem>
          <ToolRule />
          <ToolItem aria-label="参照ｼﾞｵﾒﾄﾘ">
            <svg width="22" height="20" viewBox="0 0 22 20"><circle cx="4.500" cy="4" r="3" fill="#3a86ab" stroke="#124" /><path d="M9 6l11-4v14L9 19z" fill="#4391b5" stroke="#1c5570" /><path d="M14.500 1v19" stroke="#fff" strokeWidth="2" /><path d="M14.500 1v19" stroke="#222" strokeDasharray="4 2" /></svg>
            <Caret />
          </ToolItem>
          <ToolItem aria-label="カーブ">
            <svg width="22" height="20" viewBox="0 0 22 20" fill="none" stroke="#3a7fa0" strokeWidth="1.600"><path d="M2 2q7-1 5 4-4 6-2 9 3 5 8 3 5-2 3-7-3-9 4-9" /></svg>
            <Caret />
          </ToolItem>
        </ToolRail>
        <DocFrame>
          <DocBody>
            <TreePane>
              <Tree>
                {features.map(([kind, name]) => {
                  const Icon = treeIcons[kind];
                  return (
                    <TreeRow key={name}>
                      {kind === "boss" || kind === "cut" ? <svg width="5" height="8" viewBox="0 0 5 8"><path d="M0 0l5 4-5 4z" fill="#444" /></svg> : <span />}
                      <Icon />
                      {name}
                    </TreeRow>
                  );
                })}
              </Tree>
              <ScrollTrack><ScrollThumb $h={620} $gap={79} /><Chevron /></ScrollTrack>
              <ScrollTrack $horizontal><Chevron dir="left" /><ScrollThumb $horizontal /><Chevron dir="right" /></ScrollTrack>
              <Splitter />
            </TreePane>
            <Viewport>
              <PaneGrip aria-label="パネルを閉じる"><svg width="6" height="6"><circle cx="3" cy="3" r="2.500" fill="#ccc" stroke="#888" /></svg></PaneGrip>
              <Model />
              <TriadIcon />
            </Viewport>
          </DocBody>
          <DocTabs>
            <TabNav>
              {["M2 1v8M9 1L4 5l5 4z", "M8 1L3 5l5 4z", "M3 1l5 4-5 4z", "M8 1v8M1 1l5 4-5 4z"].map((d) => (
                <TabNavButton key={d} aria-label="タブ移動"><svg width="10" height="10" fill="currentColor" stroke="currentColor"><path d={d} /></svg></TabNavButton>
              ))}
            </TabNav>
            <DocTab $active $w={49}>ﾓﾃﾞﾙ</DocTab>
            <DocTab $w={58}>3D ﾋﾞｭｰ</DocTab>
            <DocTab $w={101}>ﾓｰｼｮﾝ ｽﾀﾃﾞｨ 1</DocTab>
          </DocTabs>
        </DocFrame>
        <TaskPane>
          <TaskCard>
            <TaskText $pad={1}>Marketplace の新</TaskText>
            <TaskText $pad={13}>利用可能に</TaskText>
            <TaskButton $primary aria-label="続ける" />
            <TaskButton aria-label="後で" />
            <TaskNote $pad={9}>尋ねない</TaskNote>
          </TaskCard>
        </TaskPane>
      </Workspace>
      <StatusBar>
        <span>SOLIDWORKS Education Edition - 実習にのみ使用可</span>
        <StatusGroup>
          <StatusItem $w={102}>編集中：&nbsp;Part</StatusItem>
          <StatusItem $w={102}>
            <svg width="16" height="15" viewBox="0 0 16 16"><path d="M6 1l6 10H0z" fill="#f5b71e" stroke="#8a5a00" /><path d="M6 4v4M6 9v1.500" stroke="#111" /><path d="M9 9l4-7m-3 1l3-1v3" stroke="#111" fill="none" strokeWidth="1.500" /><path d="M1 14h14" stroke="#2a6f9c" strokeWidth="3" strokeDasharray="2 1" /></svg>
          </StatusItem>
          <StatusItem $w={66}>MMGS</StatusItem>
          <StatusItem $w={30}><svg width="6" height="4"><path d="M0 4l3-4 3 4z" fill="#444" /></svg></StatusItem>
          <svg width="15" height="14" viewBox="0 0 15 14" fill="#ddd" stroke="#555"><path d="M1 4l7-3 6 6-5 6z" /><circle cx="7" cy="6" r="2.500" /></svg>
        </StatusGroup>
      </StatusBar>
      <WindowLayer>
        <SaveDialog />
        <OptionsDialog />
      </WindowLayer>
    </Desktop>
  );
}
